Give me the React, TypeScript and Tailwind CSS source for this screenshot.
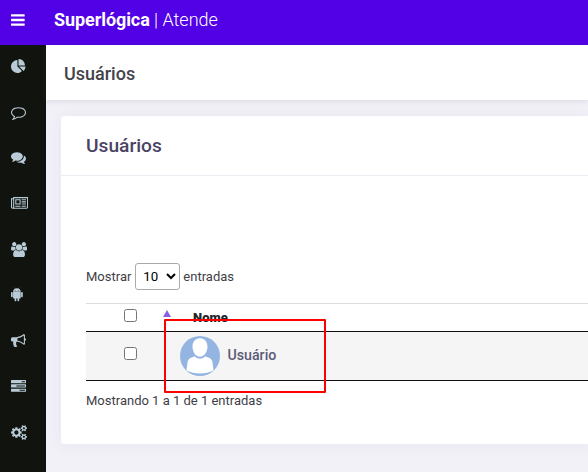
type IconProps = { path: string; box: string; className: string };

const BARS =
  'M1664 1344v128q0 26-19 45t-45 19h-1408q-26 0-45-19t-19-45v-128q0-26 19-45t45-19h1408q26 0 45 19t19 45zm0-512v128q0 26-19 45t-45 19h-1408q-26 0-45-19t-19-45v-128q0-26 19-45t45-19h1408q26 0 45 19t19 45zm0-512v128q0 26-19 45t-45 19h-1408q-26 0-45-19t-19-45v-128q0-26 19-45t45-19h1408q26 0 45 19t19 45z';

const menu = [
  {
    label: 'Painel',
    box: '0 0 1792 1792',
    width: 'w-[15px]',
    path: 'M768 890l546 546q-106 108-247.5 168t-298.5 60q-209 0-385.5-103t-279.5-279.5-103-385.5 103-385.5 279.5-279.5 385.5-103v762zm187 6h773q0 157-60 298.5t-168 247.5zm709-128h-768v-768q209 0 385.5 103t279.5 279.5 103 385.5z',
  },
  {
    label: 'Mensagens',
    box: '0 0 1792 1792',
    width: 'w-[15px]',
    path: 'M896 384q-204 0-381.5 69.5t-282 187.5-104.5 255q0 112 71.5 213.5t201.5 175.5l87 50-27 96q-24 91-70 172 152-63 275-171l43-38 57 6q69 8 130 8 204 0 381.5-69.5t282-187.5 104.5-255-104.5-255-282-187.5-381.5-69.5zm896 512q0 174-120 321.5t-326 233-450 85.5q-70 0-145-8-198 175-460 242-49 14-114 22h-5q-15 0-27-10.5t-16-27.5v-1q-3-4-.5-12t2-10 4.5-9.5l6-9 7-8.5 8-9q7-8 31-34.5t34.5-38 31-39.5 32.5-51 27-59 26-76q-157-89-247.5-220t-90.5-281q0-174 120-321.5t326-233 450-85.5 450 85.5 326 233 120 321.5z',
  },
  {
    label: 'Conversas',
    box: '0 0 1792 1792',
    width: 'w-[15px]',
    path: 'M1408 768q0 139-94 257t-256.5 186.5-353.5 68.5q-86 0-176-16-124 88-278 128-36 9-86 16h-3q-11 0-20.5-8t-11.5-21q-1-3-1-6.5t.5-6.5 2-6l2.5-5 3.5-5.5 4-5 4.5-5 4-4.5q5-6 23-25t26-29.5 22.5-29 25-38.5 20.5-44q-124-72-195-177t-71-224q0-139 94-257t256.5-186.5 353.5-68.5 353.5 68.5 256.5 186.5 94 257zm384 256q0 120-71 224.5t-195 176.5q10 24 20.5 44t25 38.5 22.5 29 26 29.5 23 25q1 1 4 4.5t4.5 5 4 5 3.5 5.5l2.5 5 2 6 .5 6.5-1 6.5q-3 14-13 22t-22 7q-50-7-86-16-154-40-278-128-90 16-176 16-271 0-472-132 58 4 88 4 161 0 309-45t264-129q125-92 192-212t67-254q0-77-23-152 129 71 204 178t75 230z',
  },
  {
    label: 'Notícias',
    box: '0 0 2048 1792',
    width: 'w-[17.1px]',
    path: 'M1024 512h-384v384h384v-384zm128 640v128h-640v-128h640zm0-768v640h-640v-640h640zm640 768v128h-512v-128h512zm0-256v128h-512v-128h512zm0-256v128h-512v-128h512zm0-256v128h-512v-128h512zm-1536 960v-960h-128v960q0 26 19 45t45 19 45-19 19-45zm1664 0v-1088h-1536v1088q0 33-11 64h1483q26 0 45-19t19-45zm128-1216v1216q0 80-56 136t-136 56h-1664q-80 0-136-56t-56-136v-1088h256v-128h1792z',
  },
  {
    label: 'Usuários',
    box: '0 0 1920 1792',
    width: 'w-[16.1px]',
    path: 'M593 896q-162 5-265 128h-134q-82 0-138-40.5t-56-118.5q0-353 124-353 6 0 43.5 21t97.5 42.5 119 21.5q67 0 133-23-5 37-5 66 0 139 81 256zm1071 637q0 120-73 189.5t-194 69.5h-874q-121 0-194-69.5t-73-189.5q0-53 3.5-103.5t14-109 26.5-108.5 43-97.5 62-81 85.5-53.5 111.5-20q10 0 43 21.5t73 48 107 48 135 21.5 135-21.5 107-48 73-48 43-21.5q61 0 111.5 20t85.5 53.5 62 81 43 97.5 26.5 108.5 14 109 3.5 103.5zm-1024-1277q0 106-75 181t-181 75-181-75-75-181 75-181 181-75 181 75 75 181zm704 384q0 159-112.5 271.5t-271.5 112.5-271.5-112.5-112.5-271.5 112.5-271.5 271.5-112.5 271.5 112.5 112.5 271.5zm576 225q0 78-56 118.5t-138 40.5h-134q-103-123-265-128 81-117 81-256 0-29-5-66 66 23 133 23 59 0 119-21.5t97.5-42.5 43.5-21q124 0 124 353zm-128-609q0 106-75 181t-181 75-181-75-75-181 75-181 181-75 181 75 75 181z',
  },
  {
    label: 'Aplicativo',
    box: '0 0 1408 1792',
    width: 'w-[11.8px]',
    path: 'M493 483q16 0 27.5-11.5t11.5-27.5-11.5-27.5-27.5-11.5-27 11.5-11 27.5 11 27.5 27 11.500zm422 0q16 0 27-11.5t11-27.5-11-27.5-27-11.5-27.5 11.5-11.5 27.5 11.5 27.5 27.5 11.5zm-812 108q42 0 72 30t30 72v430q0 43-29.5 73t-72.5 30-73-30-30-73v-430q0-42 30-72t73-30zm1060 19v666q0 46-32 78t-77 32h-75v227q0 43-30 73t-73 30-73-30-30-73v-227h-138v227q0 43-30 73t-73 30q-42 0-72-30t-30-73l-1-227h-74q-46 0-78-32t-32-78v-666h918zm-232-405q107 55 171 153.5t64 215.5h-925q0-117 64-215.5t172-153.5l-71-131q-7-13 5-20 13-6 20 6l72 132q95-42 201-42t201 42l72-132q7-12 20-6 12 7 5 20zm477 488v430q0 43-30 73t-73 30q-42 0-72-30t-30-73v-430q0-43 30-72.5t72-29.5q43 0 73 29.5t30 72.5z',
  },
  {
    label: 'Comunicados',
    box: '0 0 1792 1792',
    width: 'w-[15px]',
    path: 'M1664 640q53 0 90.5 37.5t37.5 90.5-37.5 90.5-90.5 37.5v384q0 52-38 90t-90 38q-417-347-812-380-58 19-91 66t-31 100.5 40 92.5q-20 33-23 65.5t6 58 33.5 55 48 50 61.5 50.5q-29 58-111.5 83t-168.5 11.5-132-55.5q-7-23-29.5-87.5t-32-94.5-23-89-15-101 3.5-98.5 22-110.5h-122q-66 0-113-47t-47-113v-192q0-66 47-113t113-47h480q435 0 896-384 52 0 90 38t38 90v384zm-128 604v-954q-394 302-768 343v270q377 42 768 341z',
  },
  {
    label: 'Tarefas',
    box: '0 0 1792 1792',
    width: 'w-[15px]',
    path: 'M1024 1408h640v-128h-640v128zm-384-512h1024v-128h-1024v128zm640-512h384v-128h-384v128zm512 832v256q0 26-19 45t-45 19h-1664q-26 0-45-19t-19-45v-256q0-26 19-45t45-19h1664q26 0 45 19t19 45zm0-512v256q0 26-19 45t-45 19h-1664q-26 0-45-19t-19-45v-256q0-26 19-45t45-19h1664q26 0 45 19t19 45zm0-512v256q0 26-19 45t-45 19h-1664q-26 0-45-19t-19-45v-256q0-26 19-45t45-19h1664q26 0 45 19t19 45z',
  },
  {
    label: 'Configurações',
    box: '0 0 1920 1792',
    width: 'w-[16.1px]',
    path: 'M896 896q0-106-75-181t-181-75-181 75-75 181 75 181 181 75 181-75 75-181zm768 512q0-52-38-90t-90-38-90 38-38 90q0 53 37.5 90.5t90.5 37.5 90.5-37.5 37.5-90.5zm0-1024q0-52-38-90t-90-38-90 38-38 90q0 53 37.5 90.5t90.5 37.5 90.5-37.5 37.5-90.5zm-384 421v185q0 10-7 19.5t-16 10.5l-155 24q-11 35-32 76 34 48 90 115 7 11 7 20 0 12-7 19-23 30-82.5 89.5t-78.5 59.5q-11 0-21-7l-115-90q-37 19-77 31-11 108-23 155-7 24-30 24h-186q-11 0-20-7.5t-10-17.5l-23-153q-34-10-75-31l-118 89q-7 7-20 7-11 0-21-8-144-133-144-160 0-9 7-19 10-14 41-53t47-61q-23-44-35-82l-152-24q-10-1-17-9.5t-7-19.5v-185q0-10 7-19.5t16-10.5l155-24q11-35 32-76-34-48-90-115-7-11-7-20 0-12 7-20 22-30 82-89t79-59q11 0 21 7l115 90q34-18 77-32 11-108 23-154 7-24 30-24h186q11 0 20 7.5t10 17.5l23 153q34 10 75 31l118-89q8-7 20-7 11 0 21 8 144 133 144 160 0 9-7 19-12 16-42 54t-45 60q23 48 34 82l152 23q10 2 17 10.5t7 19.5zm640 533v140q0 16-149 31-12 27-30 52 51 113 51 138 0 4-4 7-122 71-124 71-8 0-46-47t-52-68q-20 2-30 2t-30-2q-14 21-52 68t-46 47q-2 0-124-71-4-3-4-7 0-25 51-138-18-25-30-52-149-15-149-31v-140q0-16 149-31 13-29 30-52-51-113-51-138 0-4 4-7 4-2 35-20t59-34 30-16q8 0 46 46.5t52 67.5q20-2 30-2t30 2q51-71 92-112l6-2q4 0 124 70 4 3 4 7 0 25-51 138 17 23 30 52 149 15 149 31zm0-1024v140q0 16-149 31-12 27-30 52 51 113 51 138 0 4-4 7-122 71-124 71-8 0-46-47t-52-68q-20 2-30 2t-30-2q-14 21-52 68t-46 47q-2 0-124-71-4-3-4-7 0-25 51-138-18-25-30-52-149-15-149-31v-140q0-16 149-31 13-29 30-52-51-113-51-138 0-4 4-7 4-2 35-20t59-34 30-16q8 0 46 46.5t52 67.5q20-2 30-2t30 2q51-71 92-112l6-2q4 0 124 70 4 3 4 7 0 25-51 138 17 23 30 52 149 15 149 31z',
  },
];

function Icon({ path, box, className }: IconProps) {
  return (
    <svg viewBox={box} className={className} fill="currentColor" aria-hidden="true">
      <path d={path} />
    </svg>
  );
}

function Avatar() {
  return (
    <svg viewBox="0 0 40 40" className="size-10 shrink-0" aria-hidden="true">
      <circle cx="20" cy="20" r="20" fill="#94b5e2" />
      <path
        fill="#fff"
        d="M20 2.200c-4.800 0-7.500 3.600-7.500 8.400 0 5.400 3.300 10.200 7.500 10.200s7.500-4.800 7.500-10.200c0-4.800-2.700-8.400-7.500-8.400zM14.600 20.300c1.400 1.500 3.300 2.400 5.400 2.400s4-.9 5.400-2.400c.8.6 1.700.9 2.900 1.300 2.700.9 3.900 2.600 4.300 5.400l.9 7.500c-4 2.100-8.500 3-13.500 3s-9.500-.9-13.500-3l.9-7.500c.4-2.800 1.600-4.500 4.300-5.400 1.200-.4 2.100-.7 2.900-1.300z"
      />
    </svg>
  );
}

export default function App() {
  return (
    <div className="flex h-[472px] w-full flex-col overflow-hidden bg-[#f2f1f8] font-[Roboto,sans-serif] text-[13px] text-[#3f4047]">
      <header className="flex h-[45px] shrink-0 items-center bg-[#5200e6] pb-[5px] text-white">
        <button className="ml-[11px] w-[43px]" aria-label="Menu">
          <Icon path={BARS} box="128 0 1536 1792" className="h-4 w-[13.7px]" />
        </button>
        <p className="text-lg font-light whitespace-nowrap">
          <b className="font-bold tracking-[-0.08px]">Superlógica</b> | Atende
        </p>
      </header>

      <div className="flex min-h-0 flex-1">
        <nav className="flex w-[46px] shrink-0 flex-col gap-[30.7px] bg-[#11140e] pt-[14px] pl-[11px] text-[#b9cbd6]">
          {menu.map(({ label, path, box, width }) => (
            <a key={label} aria-label={label} className="block h-[15px] shrink-0">
              <Icon path={path} box={box} className={`h-[15px] ${width}`} />
            </a>
          ))}
        </nav>

        <main className="flex min-w-0 flex-1 flex-col">
          <div className="flex h-[55px] shrink-0 items-center bg-white pt-[3px] pl-[18px] shadow-[0_1px_6px_rgba(69,65,78,0.15)]">
            <h1 className="text-lg font-medium text-[#434349]">Usuários</h1>
          </div>

          <section className="mt-4 ml-[15px] h-[328px] rounded-l bg-white shadow-[0_1px_15px_1px_rgba(69,65,78,0.06)]">
            <div className="flex h-[60px] items-center border-b border-[#ebedf2] pt-0.5 pl-[25px]">
              <h2 className="text-[19.2px] font-medium text-[#4b4363]">Usuários</h2>
            </div>

            <div className="pt-[87px] pl-[25px]">
              <label className="flex h-[27px] items-center gap-[3px]">
                Mostrar
                <select className="ml-px h-[27px] w-[45px] rounded-[3px] border border-[#aaa] bg-transparent py-1 pl-[3px] text-[13.3px] text-black">
                  <option>10</option>
                </select>
                entradas
              </label>

              <div className="relative mt-[13px]">
                <div className="flex h-[29px] border-t border-b border-t-[#ddd] border-b-[#111]">
                  <div className="w-[76px] pt-[5px] pl-[38px]">
                    <input type="checkbox" className="block size-[13px]" />
                  </div>
                  <div className="flex pt-[5px] text-[#212529]">
                    <svg viewBox="0 0 8 7" className="mt-px ml-[0.5px] h-[7px] w-2" fill="#8560e0">
                      <path d="M4 0 8 7H0z" />
                    </svg>
                    <span className="ml-[22.5px] leading-[17px] font-black">Nome</span>
                  </div>
                </div>
                <div className="flex h-[49px] border-b border-[#111] bg-[#f5f5f5]">
                  <div className="w-[94px] pt-[15px] pl-[38px]">
                    <input type="checkbox" className="block size-[13px]" />
                  </div>
                  <div className="flex h-[48px] items-center gap-[7.5px]">
                    <Avatar />
                    <span className="text-[14.2px] font-medium text-[#5b5b76]">Usuário</span>
                  </div>
                </div>
                <div className="absolute top-4 left-[78px] h-[74px] w-[162px] rounded-[1px] border-2 border-[#ff0000]" />
              </div>

              <p className="mt-[10px] leading-5">Mostrando 1 a 1 de 1 entradas</p>
            </div>
          </section>
        </main>
      </div>
    </div>
  );
}
